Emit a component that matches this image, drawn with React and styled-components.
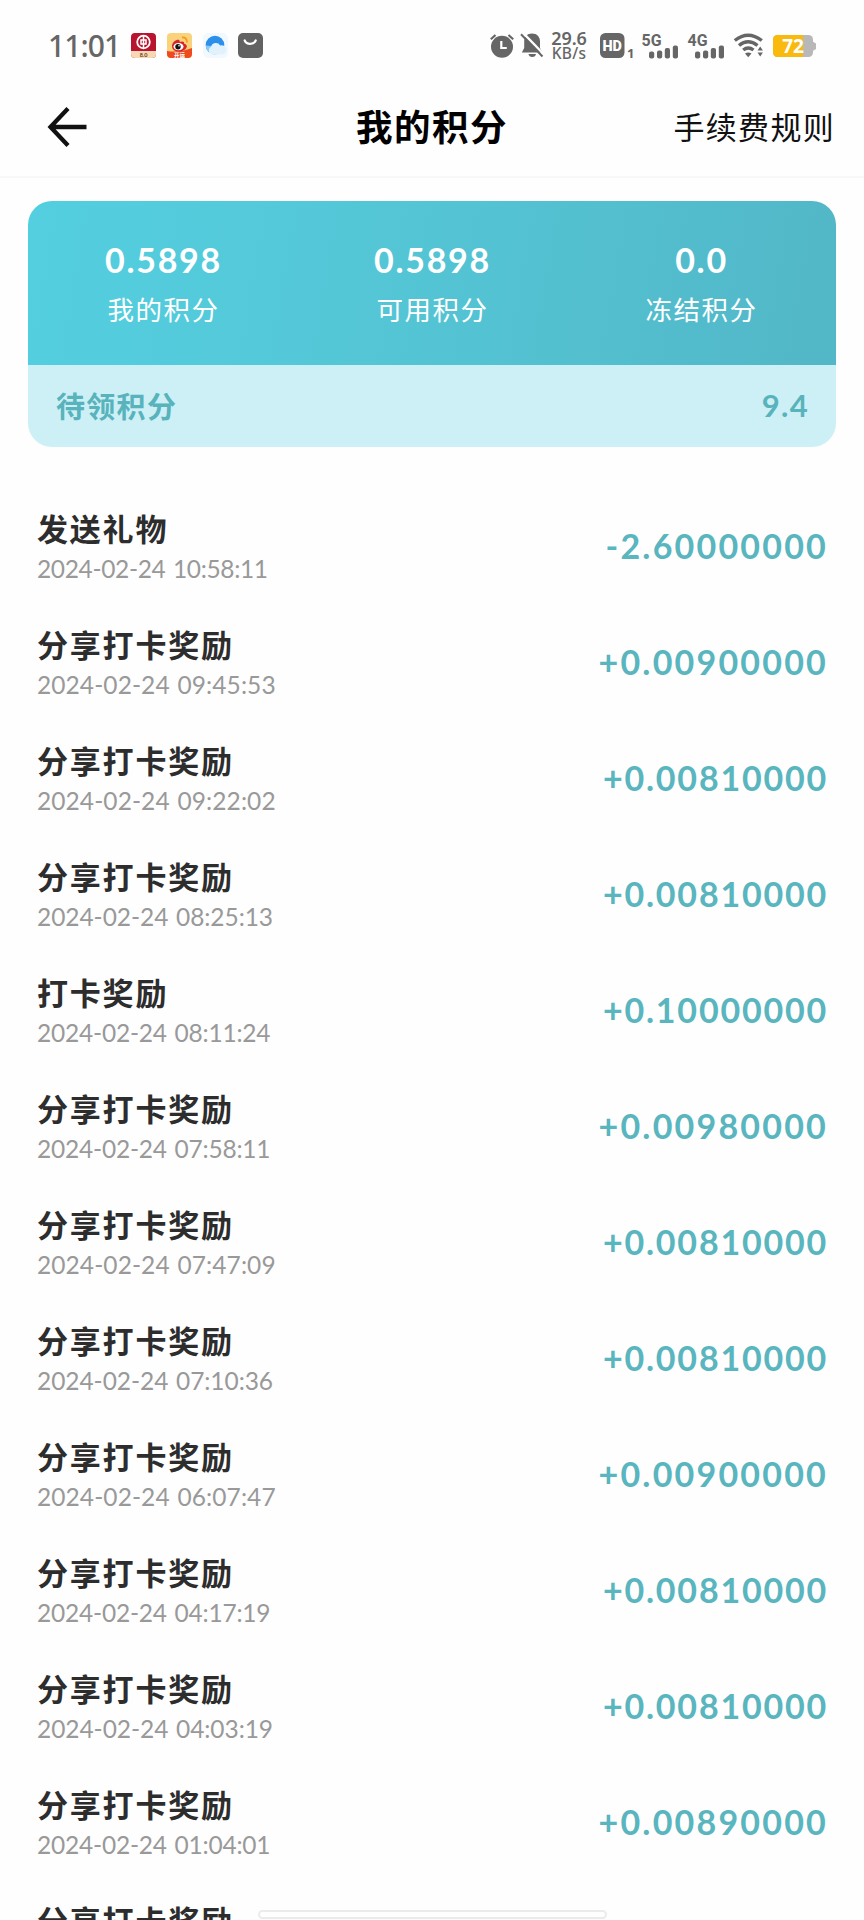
import React from "react";
import styled, { createGlobalStyle } from "styled-components";

const GlobalStyle = createGlobalStyle`
  * {
    box-sizing: border-box;
  }

  body {
    margin: 0;
    background: #fefefe;
    font-family: Lato, "Noto Sans CJK SC", sans-serif;
    font-feature-settings: "tnum" 1;
  }
`;

const Screen = styled.div`
  position: relative;
  width: 864px;
  height: 1920px;
  overflow: hidden;
  background: #fefefe;
`;

const StatusBar = styled.div`
  display: flex;
  justify-content: space-between;
  align-items: center;
  height: 91px;
  padding: 0 48px;
  color: #666;
`;

const StatusGroup = styled.div`
  display: flex;
  align-items: center;
`;

const Icon = styled.svg`
  display: block;
  flex: none;
  margin-left: ${props => props.$gap || 0}px;
  overflow: visible;
`;

const Clock = styled.div`
  width: 72px;
  font: 500 30px/34px "Noto Sans", sans-serif;
  letter-spacing: -0.9px;
  white-space: nowrap;
`;

const NetSpeed = styled.div`
  width: 38px;
  margin: 0 2px 0 6px;
  font: 600 18px/16px "Noto Sans", sans-serif;
  letter-spacing: -0.1px;
  text-align: center;
  white-space: nowrap;
`;

const NetUnit = styled.div`
  font-size: 15.5px;
  font-weight: 500;
  line-height: 15px;
  letter-spacing: 0.3px;
`;

const SimIndex = styled.div`
  width: 8px;
  margin-left: 2px;
  padding-top: 14px;
  font: 700 13px/14px "Noto Sans", sans-serif;
`;

const Header = styled.header`
  display: grid;
  grid-template-columns: 1fr auto 1fr;
  align-items: center;
  height: 87px;
  padding: 0 29px 14px;
  border-bottom: 2px solid #f8f8f8;
`;

const BackButton = styled.button`
  justify-self: start;
  margin-left: 17px;
  padding: 0;
  border: 0;
  background: none;
`;

const Title = styled.h1`
  margin: 0;
  color: #000;
  font-size: 36.5px;
  font-weight: 700;
  line-height: 48px;
  letter-spacing: 1.5px;
`;

const RulesLink = styled.a`
  justify-self: end;
  color: #111;
  font-size: 31px;
  line-height: 44px;
  letter-spacing: 1.3px;
`;

const Card = styled.section`
  margin: 23px 28px 0;
  overflow: hidden;
  border-radius: 24px;
`;

const Summary = styled.div`
  display: grid;
  grid-template-columns: repeat(3, 1fr);
  height: 164px;
  padding: 38px 0 0 1px;
  background: linear-gradient(100deg, #53cfe0 0%, #54c8d8 35%, #52b7c7 100%);
  color: #fff;
  text-align: center;
`;

const SummaryValue = styled.div`
  font-size: 34px;
  font-weight: 700;
  line-height: 42px;
  letter-spacing: 1.7px;
`;

const SummaryLabel = styled.div`
  margin-top: 9px;
  font-size: 26.5px;
  font-weight: 400;
  line-height: 40px;
  letter-spacing: 1.5px;
`;

const Pending = styled.div`
  display: flex;
  justify-content: space-between;
  align-items: center;
  height: 82px;
  padding: 0 27px 2px 28px;
  background: #ccf0f5;
  color: #58b3bc;
  font-size: 29px;
  font-weight: 700;
  letter-spacing: 1.3px;
`;

const PendingValue = styled.span`
  font-size: 31px;
`;

const List = styled.ul`
  margin: 43px 0 0;
  padding: 0 36px 0 37px;
  list-style: none;
`;

const Row = styled.li`
  display: flex;
  justify-content: space-between;
  align-items: center;
  height: 116px;
`;

const RowTitle = styled.div`
  color: #2d2d2d;
  font-size: 31px;
  font-weight: 700;
  line-height: 40px;
  letter-spacing: 1.8px;
`;

const ones = text => text.split("1").length - 1;

const RowTime = styled.div`
  color: #999;
  font-size: 24.5px;
  line-height: 39px;
  letter-spacing: ${props => 0.08 - props.$ones * 0.14}px;
  word-spacing: 1.5px;
`;

const Amount = styled.div`
  padding-bottom: 5px;
  color: #59b5be;
  font-size: 34px;
  font-weight: 700;
  letter-spacing: ${props => 2.2 - props.$ones * 0.4}px;
`;

const HomeHandle = styled.div`
  position: absolute;
  left: 258px;
  bottom: 1px;
  width: 349px;
  height: 9px;
  border: 2px solid #ebebeb;
  border-radius: 5px;
  background: #fefefe;
`;

const summary = [
  { label: "我的积分", value: "0.5898" },
  { label: "可用积分", value: "0.5898" },
  { label: "冻结积分", value: "0.0" }
];

const records = [
  { title: "发送礼物", time: "2024-02-24 10:58:11", amount: "-2.60000000" },
  { title: "分享打卡奖励", time: "2024-02-24 09:45:53", amount: "+0.00900000" },
  { title: "分享打卡奖励", time: "2024-02-24 09:22:02", amount: "+0.00810000" },
  { title: "分享打卡奖励", time: "2024-02-24 08:25:13", amount: "+0.00810000" },
  { title: "打卡奖励", time: "2024-02-24 08:11:24", amount: "+0.10000000" },
  { title: "分享打卡奖励", time: "2024-02-24 07:58:11", amount: "+0.00980000" },
  { title: "分享打卡奖励", time: "2024-02-24 07:47:09", amount: "+0.00810000" },
  { title: "分享打卡奖励", time: "2024-02-24 07:10:36", amount: "+0.00810000" },
  { title: "分享打卡奖励", time: "2024-02-24 06:07:47", amount: "+0.00900000" },
  { title: "分享打卡奖励", time: "2024-02-24 04:17:19", amount: "+0.00810000" },
  { title: "分享打卡奖励", time: "2024-02-24 04:03:19", amount: "+0.00810000" },
  { title: "分享打卡奖励", time: "2024-02-24 01:04:01", amount: "+0.00890000" },
  { title: "分享打卡奖励", time: "", amount: "" }
];

const BankIcon = () => (
  <Icon $gap={11} width="25" height="25" viewBox="0 0 25 25">
    <rect width="25" height="25" rx="4" fill="#b9142f" />
    <path d="M0 18h25v3a4 4 0 0 1-4 4H4a4 4 0 0 1-4-4z" fill="#f6d9b4" />
    <circle cx="12.5" cy="9" r="6.3" fill="none" stroke="#fff" strokeWidth="1.8" />
    <path d="M12.5 3v12M10 7h5v4h-5z" fill="#b9142f" stroke="#fff" strokeWidth="1.5" />
    <text x="12.5" y="23.5" fill="#6b3a22" fontSize="5.5" fontWeight="700" textAnchor="middle">
      8.0
    </text>
  </Icon>
);

const WeiboIcon = () => (
  <Icon $gap={11} width="25" height="25" viewBox="0 0 25 25">
    <rect width="25" height="25" rx="4" fill="#fbd27c" />
    <path d="M0 18q12 2 25-3v6a4 4 0 0 1-4 4H4a4 4 0 0 1-4-4z" fill="#ee4a1f" />
    <path
      d="M5 13c0-4 5-7 7-6 1 .5.8 1.5.6 2 3-1 5-.6 4.4 1.6 6 2 1.5 8-5 8-4 0-7-2-7-5.6z"
      fill="#d8232a"
    />
    <ellipse cx="11.5" cy="13.6" rx="5" ry="3.7" fill="#fff" />
    <circle cx="11" cy="13.7" r="2.7" fill="#111" />
    <circle cx="12" cy="12.8" r="0.8" fill="#fff" />
    <path d="M15 4.5q5-.5 5 5" fill="none" stroke="#f39a1f" strokeWidth="1.8" />
    <text x="12.5" y="23.5" fill="#fff" fontSize="5.5" fontWeight="700" textAnchor="middle">
      开运
    </text>
  </Icon>
);

const BrowserIcon = () => (
  <Icon $gap={11} width="25" height="25" viewBox="0 0 25 25">
    <rect width="25" height="25" rx="5" fill="#f2f9fe" />
    <circle cx="12" cy="12" r="9.3" fill="#2c8fea" />
    <path d="M2.8 12.500a9.300 9.300 0 0 0 8 8.800L8 13z" fill="#8ccbf6" />
    <path
      d="M9.500 21.500a4 4 0 0 1-1.500-7.500 5 5 0 0 1 9.200-1.500 4.600 4.600 0 0 1 3 9z"
      fill="#e2f2fd"
    />
  </Icon>
);

const StoreIcon = () => (
  <Icon $gap={10} width="25" height="25" viewBox="0 0 25 25">
    <rect width="25" height="25" rx="5" fill="#626262" />
    <path d="M6.700 7.500a5.800 4.800 0 0 0 11 0" fill="none" stroke="#fff" strokeWidth="2.2" strokeLinecap="round" />
  </Icon>
);

const AlarmIcon = () => (
  <Icon width="24" height="25" viewBox="0 0 24 25" fill="#666">
    <circle cx="12" cy="13.8" r="11" />
    <path d="M.8 6.300L5.500 2M18.500 2l4.700 4.300" stroke="#666" strokeWidth="2.2" />
    <path d="M11.300 8v7h5.500" fill="none" stroke="#fff" strokeWidth="2.2" />
  </Icon>
);

const MutedBellIcon = () => (
  <Icon $gap={7} width="23" height="25" viewBox="0 0 23 25">
    <path
      d="M11 .5c5 0 8 3.500 8 8v6.500l2.500 4.500H.8L3.200 15V8.500c0-4.500 3-8 7.800-8z"
      fill="#666"
    />
    <path d="M7.500 21h7.500a3.800 3.500 0 0 1-7.500 0z" fill="#666" />
    <path d="M1.500-.7L23 21.500" stroke="#fefefe" strokeWidth="2.5" />
    <path d="M0 1.300L21.500 23.500" stroke="#666" strokeWidth="2" />
  </Icon>
);

const HdIcon = () => (
  <Icon $gap={10} width="25" height="25" viewBox="0 0 25 25">
    <rect width="24.5" height="25" rx="5.5" fill="#666" />
    <text
      x="12.2"
      y="18"
      fill="#fff"
      fontFamily="Roboto"
      fontSize="15.5"
      fontWeight="900"
      textAnchor="middle"
      textLength="19.5"
      lengthAdjust="spacingAndGlyphs"
    >
      HD
    </text>
  </Icon>
);

const Signal = ({ label, gap }) => (
  <Icon $gap={gap} width="37" height="26" viewBox="0 0 37 26" fill="#666">
    <text
      x="-0.5"
      y="12.5"
      fontFamily="Roboto"
      fontSize="17"
      fontWeight="700"
      textLength="20"
      lengthAdjust="spacingAndGlyphs"
    >
      {label}
    </text>
    <rect x="7" y="18.5" width="5.2" height="7" rx="2" />
    <rect x="15" y="17.5" width="5.2" height="8" rx="2" />
    <rect x="22.8" y="15" width="5.2" height="10.5" rx="2" />
    <rect x="30.8" y="12.5" width="5.2" height="13" rx="2" />
  </Icon>
);

const WifiIcon = () => (
  <Icon $gap={9} width="30" height="25" viewBox="0 0 30 25">
    <g fill="none" stroke="#666" strokeWidth="3.4">
      <path d="M.8 7.500Q14-3.200 27.800 7.500" />
      <path d="M5 12.500q9-7.500 18.500 0" />
      <path d="M9.200 17q5-4 10.300 0" />
    </g>
    <path d="M11 20.500q3.300-2.200 6.500 0l-3.300 3.800z" fill="#666" />
    <path d="M23.500 17.500l2.700-4 2.700 4zM23.500 19.500l2.700 4 2.700-4z" fill="#666" />
  </Icon>
);

const BatteryIcon = () => (
  <Icon $gap={9} width="43" height="22" viewBox="0 0 43 22">
    <rect width="40" height="22" rx="4.5" fill="#b8b8b8" />
    <path d="M38 5.500l5 3v5.500l-5 3z" fill="#b8b8b8" />
    <path d="M4.500 0H30v22H4.500A4.500 4.500 0 0 1 0 17.500v-13A4.500 4.500 0 0 1 4.500 0z" fill="#fab90d" />
    <text
      x="20"
      y="17.5"
      fill="#fff"
      fontFamily="Noto Sans"
      fontSize="19"
      fontWeight="700"
      textAnchor="middle"
    >
      72
    </text>
  </Icon>
);

const BackIcon = () => (
  <Icon width="42" height="42" viewBox="0 0 42 42" fill="none" stroke="#111" strokeWidth="4.3">
    <path d="M22 2.500L4.500 21 22 39.500M4.500 21h36" />
  </Icon>
);

const Record = ({ title, time, amount }) => (
  <Row>
    <div>
      <RowTitle>{title}</RowTitle>
      <RowTime $ones={ones(time)}>{time || "\u00a0"}</RowTime>
    </div>
    <Amount $ones={ones(amount)}>{amount}</Amount>
  </Row>
);

export default function App() {
  return (
    <Screen>
      <GlobalStyle />
      <StatusBar>
        <StatusGroup>
          <Clock>11:01</Clock>
          <BankIcon />
          <WeiboIcon />
          <BrowserIcon />
          <StoreIcon />
        </StatusGroup>
        <StatusGroup>
          <AlarmIcon />
          <MutedBellIcon />
          <NetSpeed>
            <div>29.6</div>
            <NetUnit>KB/s</NetUnit>
          </NetSpeed>
          <HdIcon />
          <SimIndex>1</SimIndex>
          <Signal label="5G" gap={7} />
          <Signal label="4G" gap={9} />
          <WifiIcon />
          <BatteryIcon />
        </StatusGroup>
      </StatusBar>
      <Header>
        <BackButton>
          <BackIcon />
        </BackButton>
        <Title>我的积分</Title>
        <RulesLink>手续费规则</RulesLink>
      </Header>
      <Card>
        <Summary>
          {summary.map(item => (
            <div key={item.label}>
              <SummaryValue>{item.value}</SummaryValue>
              <SummaryLabel>{item.label}</SummaryLabel>
            </div>
          ))}
        </Summary>
        <Pending>
          待领积分
          <PendingValue>9.4</PendingValue>
        </Pending>
      </Card>
      <List>
        {records.map((record, index) => (
          <Record key={index} {...record} />
        ))}
      </List>
      <HomeHandle />
    </Screen>
  );
}
